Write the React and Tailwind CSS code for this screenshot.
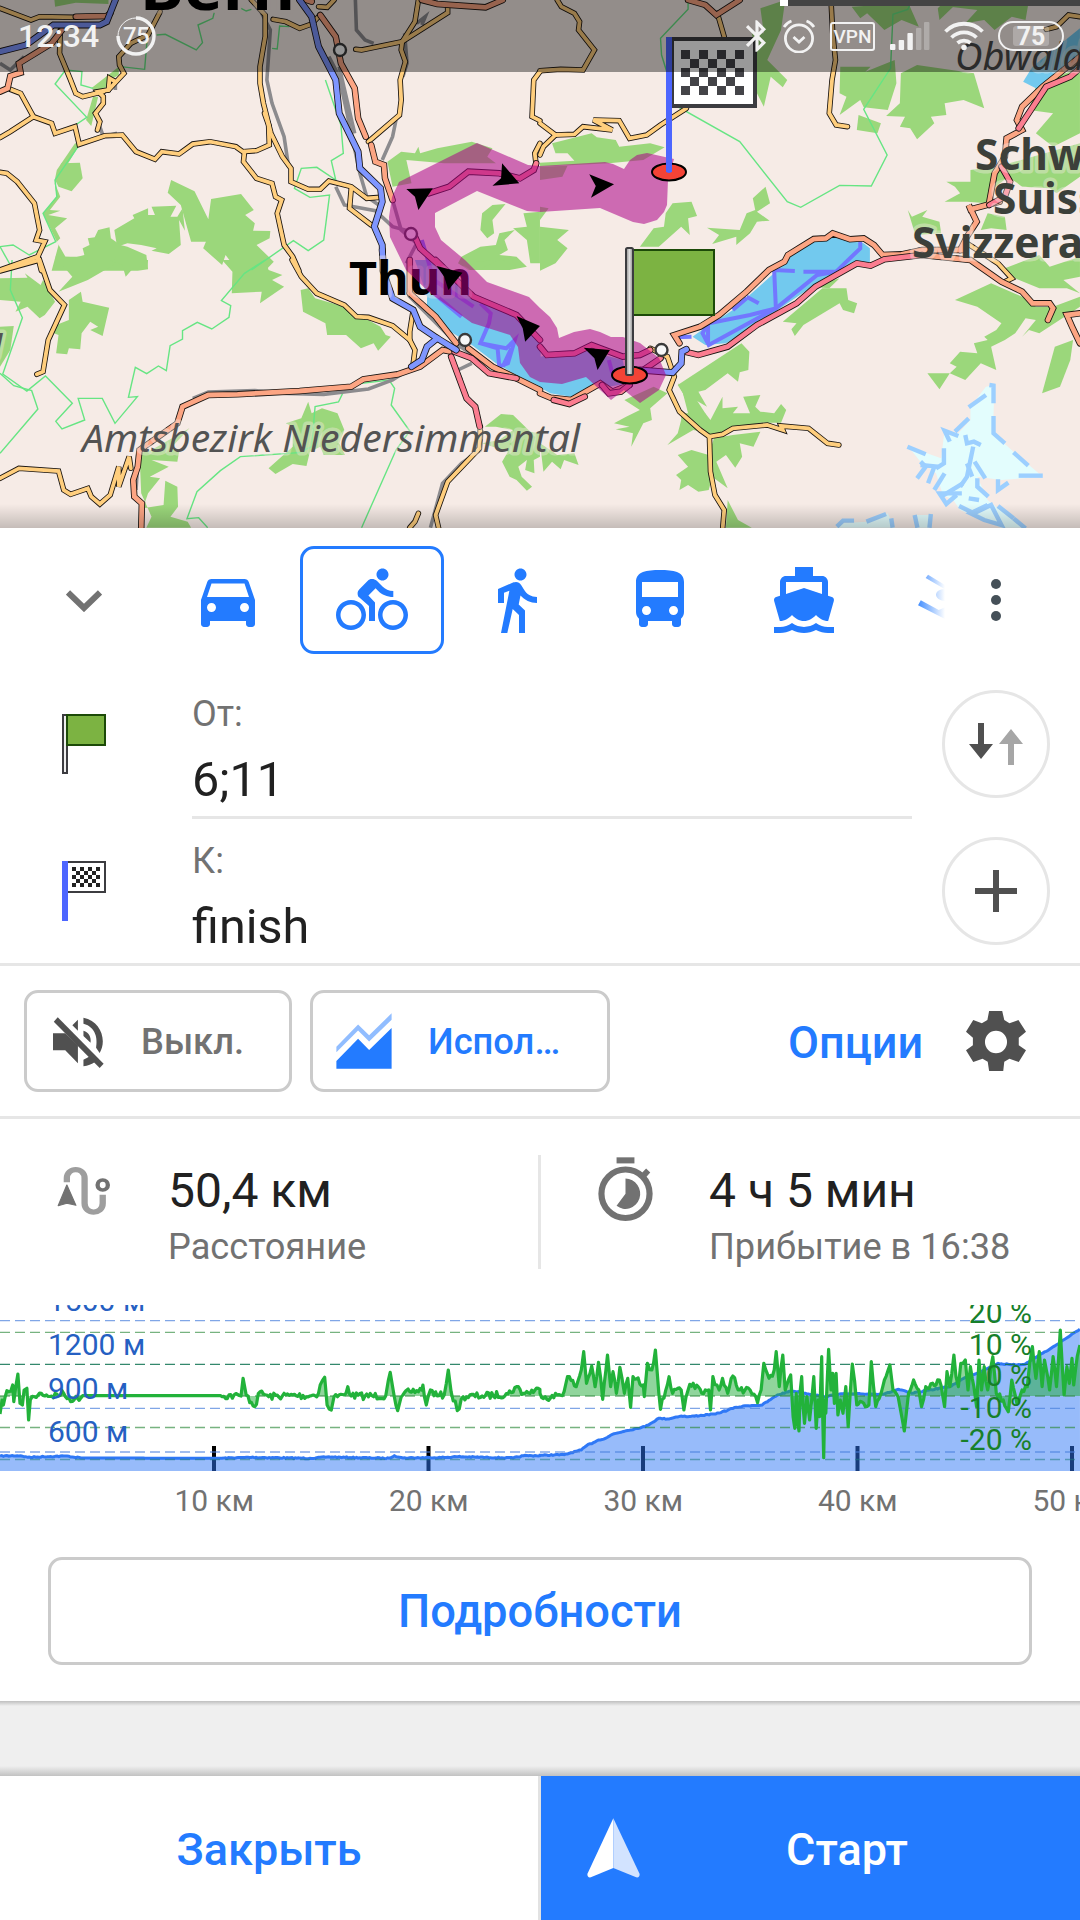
import React from "react";
import { MdDirectionsCar, MdDirectionsBus, MdBluetooth } from "react-icons/md";

const BLUE = "#237bff";

/* ---------- Map data: four tiles, each with its own local grid ---------- */
const TILES = {
  a: "translate(0 0) scale(.34436 .33333)",
  b: "translate(540 0) scale(.34436 .33333)",
  c: "translate(0 260) scale(.34436 .33333)",
  d: "translate(540 200) scale(.34436 .33333)",
};

const FORESTS = {
  a: [
    "158,0 315,0 315,12 220,8 160,20", "265,265 345,200 345,225 320,240 310,260 285,275",
    "270,290 285,290 265,378 250,360", "218,430 232,432 180,520 158,545 165,510",
    "178,490 232,488 240,535 208,574 170,560 160,540", "158,545 175,590 145,630 175,632 140,645 195,655 160,685 175,715 165,725 125,640 165,590",
    "497,540 565,574 605,658 613,597 700,582 737,630 712,645 740,670 735,692 785,693 783,715 745,735 795,785 770,812 690,812 655,765 645,795 590,745 598,725 555,725 525,615 487,578",
    "332,690 390,655 385,645 430,625 430,645 450,645 440,620 512,617 495,650 515,650 530,625 537,692 520,660 525,735 490,762 440,752 455,745 410,735 370,730 340,740",
    "165,725 190,770 220,772 245,765 240,745 260,735 255,715 275,712 285,690 318,682 322,715 350,735 370,740 425,765 430,808 400,812 150,812 170,735",
    "1125,485 1165,455 1205,460 1215,440 1220,460 1270,445 1370,425 1430,445 1415,470 1440,490 1290,490 1180,480 1195,550 1140,560",
    "1395,690 1400,640 1430,615 1468,612 1430,660 1435,700 1415,715", "1340,770 1395,740 1440,735 1450,700 1495,690 1465,720 1475,750 1450,765 1500,770 1530,800 1480,810 1360,810 1330,790",
    "1520,640 1568,635 1568,790 1540,790 1530,720 1490,685 1530,680",
  ],
  b: [
    "35,430 150,400 165,412 220,420 230,440 320,430 362,442 300,480 200,490 0,500 0,488 100,482 80,460 45,460",
    "0,500 80,497 65,530 0,540", "0,620 25,625 0,660 0,680 84,690 50,720 80,745 45,790 0,812",
    "640,25 712,0 700,90 660,180 718,240 705,262 670,230 650,320 630,280 630,180 615,100 650,100",
    "905,20 1070,10 1100,80 1050,60 1000,90 950,40 930,55", "1155,25 1180,0 1200,20 1160,60",
    "1180,0 1420,0 1410,60 1370,50 1320,90 1290,60 1235,70 1270,30 1190,20",
    "872,200 960,200 945,215 1030,180 1035,250 1010,330 940,322 930,300 870,345 890,290 870,280", "925,345 990,370 980,400 920,390",
    "1048,220 1095,195 1260,220 1290,325 1230,300 1175,310 1180,345 1135,350 1145,370 1095,418 1075,385 1045,380 1060,350 1005,348 1045,310",
    "1440,260 1568,200 1568,400 1490,440 1440,400 1490,340 1420,330",
    "1260,520 1568,430 1568,530 1500,580 1480,565 1400,560 1360,530 1310,570 1240,590",
    "1175,605 1220,580 1205,560 1180,545 1250,545 1250,510 1320,500 1300,610 1240,605",
    "1068,630 1080,650 1125,630 1110,650 1160,665 1165,700 1090,705",
    "485,683 580,690 600,640 625,630 618,595 655,560 668,610 630,635 667,662 630,665 610,700 570,735 570,710 500,732 520,705",
    "365,640 385,610 440,605 456,648 430,655 435,705 410,680 345,740 290,740 330,685 360,680",
    "1300,640 1350,650 1355,690 1310,685 1280,690",
  ],
  c: [
    "160,-10 335,-10 330,15 255,60 170,95 210,50", "320,0 430,0 428,27 395,15 365,50 355,15",
    "0,55 80,53 72,40 118,75 125,60 160,125 130,165 115,175 80,140 45,155 60,125 0,120",
    "150,200 200,180 200,120 235,95 240,125 317,143 298,228 262,210 285,200 262,185 237,220 233,268 200,265 195,283 163,280 170,225 145,215",
    "0,200 40,198 30,270 0,320", "645,0 770,0 780,30 820,45 790,60 825,80 755,130 760,95 673,100 675,35",
    "873,90 895,85 915,115 1000,140 1105,200 1120,225 1135,230 1098,272 1085,250 1048,265 1005,225 950,225 945,190 880,155",
    "830,490 875,475 895,425 905,460 935,445 980,460 1000,510 985,550 1002,585 940,585 930,560 900,575 890,618 850,612 800,642 780,625 850,560 850,500",
    "405,580 440,570 550,505 500,560 520,575 515,605 440,600 490,620 435,650 465,655 430,700 415,745 475,735 480,662 515,680 517,740 495,770 545,785 555,803 425,803 440,770 410,700",
    "1408,500 1455,462 1490,465 1540,515 1568,520 1568,590 1550,600 1552,640 1525,630 1530,600 1505,620 1515,650 1545,680 1530,692 1500,660 1480,650 1458,605 1475,575 1400,550 1450,540 1490,510 1440,500",
    "1355,25 1380,5 1450,0 1400,25", "1460,0 1485,0 1500,20",
  ],
  d: [
    "705,365 820,265 890,265 895,300 921,310 912,340 880,330 870,310 765,375 740,408 730,388 745,370", "790,260 870,235 840,265",
    "400,555 585,430 608,455 605,510 580,517 575,545 545,520 480,570 460,575 485,620 460,605 450,600 455,640 430,620 415,580",
    "410,640 480,640 495,660 530,590 530,625 575,620 560,640 610,640 590,590 640,585 625,620 640,635 680,640 700,612 715,630 700,668 640,668 560,690 500,705 470,695 445,690 370,735 400,700 410,660",
    "505,715 560,705 640,695 620,740 580,730 587,770 567,803 540,765 512,785 545,865 500,830 490,870 460,875 430,855 405,870 410,840 395,825 430,800 400,765 440,750 490,765",
    "400,550 415,580 430,640 450,680 490,700 480,640 455,600", "545,900 575,960 615,983 540,983",
    "245,600 330,560 370,580 320,625 325,660 300,670 265,740 270,700 220,688 260,680 215,670 250,650 290,630",
    "0,730 30,750 50,765 100,760 112,795 70,780 60,808 35,785 10,815",
    "1205,300 1310,250 1400,290 1440,320 1490,320 1568,290 1568,320 1450,400 1420,390 1400,410 1440,360 1410,355 1380,400 1350,420 1310,440 1325,510 1280,490 1235,540 1190,520 1160,568 1125,520 1190,520 1210,500 1190,490 1220,455 1270,460 1260,430 1300,420 1290,410 1325,390 1340,370 1270,320",
    "1495,440 1548,420 1540,480 1510,560 1458,580", "1350,205 1450,165 1480,200 1568,170 1568,230 1520,240 1568,280 1530,265 1450,265 1380,235",
  ],
};

const BORDERS = {
  a: [
    "190,210 160,252 252,352 215,378 232,432 160,540 165,590 125,640 162,725 85,765 38,735 0,740", "0,740 30,795",
    "190,210 238,215 235,255 270,265", "455,105 480,103 570,150 588,128 575,75 618,55 622,38", "428,108 420,208 350,200",
    "700,25 715,33 730,28", "790,145 805,147 812,78 840,80",
    "945,240 990,375 997,460 962,482 975,540 920,502 875,505 855,565 900,592 957,585 940,720 895,752 852,722 730,810",
  ],
  b: ["430,0 430,28 350,115 353,165 400,320 580,425 718,605 757,622 870,556 962,558 1008,465 940,328 1018,205 1025,43 1068,28 1080,0"],
  c: [
    "770,0 710,40 643,122 670,137 665,172 615,207 573,187 530,212 530,237 494,257 483,332 460,318 426,341 393,322 373,412 399,410 334,490 297,415 227,415 246,480 180,507 162,484 210,430 132,348 78,393 8,342 65,173 30,90 35,0",
    "0,340 40,377 92,392 110,447 0,580", "603,803 577,773 543,776 572,695 640,632 698,590 868,578 905,560 915,440 983,426 995,400",
    "1050,370 1130,360 1146,385 1136,435 1190,513 1150,570 1050,803",
  ],
};

const RAILS = {
  a: [
    "755,30 785,90 775,240 790,310 825,410 838,500", "955,170 985,230 1045,520 1065,590 1100,615", "1032,0 1035,90 1060,120 1085,130",
    "1150,360 1140,410 1110,480", "975,560 1000,615 1090,632 1140,680 1195,695", "0,190 30,210 70,170", "1140,600 1165,690 1210,730 1180,790",
    "1210,70 1235,50 1225,75", "1175,100 1182,190 1170,230", "280,350 300,410 340,400", "335,235 335,270", "985,200 1030,400",
  ],
  c: [
    "560,415 605,396 740,392 830,400 940,403 1070,387 1140,360 1200,320", "1185,105 1330,255 1440,330", "1330,330 1370,310",
    "1310,290 1340,360", "1400,510 1395,570 1340,610 1285,670 1250,803", "402,580 395,690",
  ],
};

const ROADS = [
  {
    color: "#ffce7d", width: 3.8,
    lines: {
      a: [
        "0,25 90,60 115,50 220,52", "175,90 173,160 203,235 220,280 240,290 300,275",
        "465,35 430,105 380,130 345,170 347,195 360,220 315,270 285,275 300,290 300,310 277,340 290,365 283,390", "315,270 318,235 335,245",
        "30,268 60,280 97,350 150,370 160,400 218,380 230,433 305,407 355,405 395,455 450,478 470,455 520,462 560,432 610,425 685,440 705,455 745,452 782,435 780,375",
        "0,413 30,395 97,350",
        "730,0 770,45 770,110 755,200 755,250 765,310 787,400 820,470 845,505 845,545 895,568 930,568 955,543 1020,560 1065,595 1105,592",
        "768,340 780,375", "710,455 707,485 745,535 790,550 800,590 818,600 805,640 825,735 850,770 868,812",
        "0,517 20,520 50,545 100,610 115,690 105,720 130,725 110,770 0,810", "110,770 120,812", "793,58 830,65 870,85 905,72 925,50",
        "970,0 950,22 925,20", "1215,0 1205,65 1168,125 1165,150 1177,185 1162,240 1165,300 1160,345 1070,425", "1168,125 1300,38 1300,20",
        "1033,148 1050,150 1168,125", "1020,565 1015,625 1078,675", "1568,215 1550,240 1545,350 1568,362", "1568,430 1553,460 1557,495",
      ],
      b: [
        "50,0 62,20 100,40 115,65 112,90 158,150 125,210 60,208 0,212", "515,40 535,110",
        "0,370 45,405 100,403 125,380 210,390 155,360 230,362 260,415 310,405 350,375 425,325", "45,405 10,440 0,465",
        "845,0 850,100 858,180 848,240 840,340 860,375 893,380", "1470,88 1500,80 1535,45 1568,50",
      ],
      c: [
        "0,33 115,0 145,90 187,135 140,240 125,335 107,343",
        "0,655 55,625 170,633 185,690 205,703 255,685 265,710 290,732 320,705 345,620 345,680 375,590 380,625",
        "848,0 875,50 920,100 1000,135 1035,170 1070,172 1140,197 1190,240 1205,270 1200,310", "1200,150 1190,215 1190,240",
        "1395,500 1392,565 1300,665 1265,765 1275,810", "1215,760 1205,785 1190,803",
      ],
      d: [
        "320,445 370,470 390,530 375,570 405,635 465,690 492,710 495,815 508,885 535,930 530,990",
        "492,710 530,703 560,685 660,675 705,690 700,678 780,685 835,730 868,735", "1240,130 1330,190 1370,235 1350,245",
      ],
    },
  },
  {
    color: "#fca583", width: 4.8,
    lines: {
      a: [
        "220,50 310,48 320,40", "180,90 150,130 55,190 60,218 30,228 22,265 0,275", "930,45 975,110 990,190 1030,265 1040,355 1062,410",
        "1078,435 1090,485 1115,495 1118,535 1140,600", "1225,0 1270,12 1410,22 1460,0", "890,0 905,5",
      ],
      b: [
        "430,0 480,15 512,45 580,0", "1568,170 1460,260 1400,320 1385,360 1400,390 1355,415 1350,470 1320,520 1305,605",
        "1335,605 1250,628 1245,615 1268,665 1240,710 1220,750",
      ],
      c: [
        "1190,100 1265,170 1325,250", "1190,0 1190,100", "1360,265 1430,320 1500,355 1568,390",
        "1310,275 1285,270 1220,320 1155,343 1055,358 1020,380 870,393 690,403 605,405 530,440 515,490 405,570 400,620 387,660 390,710 412,730 410,810",
      ],
      d: [
        "405,430 390,405 465,380 520,345 600,275 665,210 710,185 720,165 795,117 830,115 850,100 900,118 940,115 970,135 995,165 1050,163 1110,150 1230,150",
        "1110,165 1250,180 1340,245 1400,275 1430,310 1480,310 1490,325 1475,360", "1568,340 1530,345 1545,380 1568,430",
        "0,580 30,593 90,600 175,550 210,575 260,555",
      ],
    },
  },
  {
    color: "#fb7d90", width: 4.8,
    lines: {
      a: ["1205,710 1220,745 1280,800", "1245,580 1305,560 1360,515 1450,520 1510,535 1550,510 1557,490"],
      b: ["1568,205 1540,230 1470,260 1390,385", "1340,500 1365,545 1350,590 1305,615"],
      c: ["1320,275 1370,295 1420,340 1500,355", "1310,290 1355,415 1380,440 1393,500", "1265,0 1375,110 1500,165 1568,240"],
      d: [
        "0,440 20,465 100,460 150,435 240,470 290,465 320,450", "300,510 350,475", "180,555 200,580 235,575 260,555", "40,600 85,612 130,590",
        "420,455 460,465 545,440 630,375 745,310 800,260 920,190 960,197 1000,178 1110,165",
      ],
    },
  },
  {
    color: "#7f96ff", width: 5.2,
    lines: {
      a: [
        "335,0 310,65 290,75 155,75 75,135 0,155",
        "870,0 905,50 925,140 975,240 985,340 1040,455 1045,505 1105,565 1110,605 1087,680 1110,735 1112,812",
      ],
      c: ["1110,-30 1115,40 1140,115 1200,150 1220,200 1270,235 1325,270", "1270,235 1240,260 1225,300 1195,320"],
      d: ["290,510 385,518 410,490 412,455 425,448"],
    },
  },
];

const LAKES = {
  b: ["1430,200 1568,85 1568,170 1450,270 1403,245"],
  c: ["1205,0 1265,0 1380,120 1500,170 1570,250 1570,380 1500,345 1440,310 1370,255 1240,170 1240,110"],
  d: [
    "-1,470 130,450 240,480 255,550 200,560 170,545 90,590 30,580 -1,562",
    "443,410 470,390 560,330 690,210 720,170 795,122 850,112 900,122 940,130 958,145 958,185 860,225 790,260 690,330 620,380 540,430 480,435",
  ],
};

const FERRIES = {
  c: ["1265,105 1340,170", "1395,130 1425,160 1420,190 1395,250 1445,265 1450,320 1475,310 1495,240 1470,265 1395,250", "1460,320 1485,265", "1225,-60 1260,60 1375,140"],
  d: [
    "930,125 930,145 860,215 805,225 685,325 610,345 490,370", "685,325 490,435 472,400 488,370 488,430", "685,325 680,210 740,213", "765,215 870,215",
    "600,290 635,310", "560,330 600,295", "390,412 440,410", "200,480 210,520",
  ],
};

const GLACIER = [
  "1295,560 1320,555 1315,700 1380,760 1460,830 1340,840 1270,830 1300,900 1400,983 1340,983 1220,930 1200,900 1170,885 1150,820 1105,785 1070,740 1165,775 1175,690 1215,700 1250,660 1250,620",
  "870,970 950,965 1010,940 1030,983 860,983", "1085,945 1135,945 1130,983 1095,983",
];
const GLACIER_EDGES = [
  "1305,555 1317,557 1317,610", "1295,585 1245,622", "1317,648 1317,700 1350,730", "1245,655 1205,695", "1215,708 1175,692 1190,725",
  "1067,740 1120,763", "1173,745 1173,790 1150,805", "1375,757 1418,797", "1390,827 1460,827", "1105,785 1120,800 1095,835", "1105,795 1155,800",
  "1145,800 1127,850", "1175,820 1145,870", "1228,850 1165,890", "1225,880 1160,880 1180,912 1210,885", "1235,705 1240,730 1260,725 1280,735",
  "1258,740 1240,830 1220,860", "1262,785 1293,835", "1240,790 1255,830", "1270,835 1270,860 1302,890", "1330,838 1330,870 1360,848",
  "1245,895 1275,900", "1217,918 1260,940 1310,915 1340,975 1290,960 1250,940 1300,915", "1330,918 1375,955", "1375,955 1410,985",
  "862,980 880,962 912,962", "948,965 1005,942", "1020,955 1024,983", "1088,945 1096,983", "1135,942 1131,983",
];

const ARROWS = {
  a: ["1180,567 1257,565 1215,630 1205,590", "1458,490 1508,550 1430,557 1455,535"],
  b: ["143,523 215,553 148,593 162,558"],
  c: ["1268,18 1343,38 1302,90 1290,50", "1500,168 1568,198 1525,245 1518,205"],
  d: ["127,443 203,450 167,510 158,475"],
};

const ROUTE =
  "477,143 399,182 392,197 389,217 390,237 406,270 430,293 472,323 510,335 518,347 520,363 530,377 540,382 562,384 586,377 611,400 624,390 640,403 659,390 666,375 659,358 640,343 623,337 611,337 600,332 590,329 574,332 559,338 557,328 550,317 540,308 529,297 487,282 465,260 441,240 435,227 435,213 477,191 527,211 540,212 600,208 633,222 644,224 657,220 664,212 667,205 668,180 674,159 647,153 637,155 630,160 624,169 613,164 605,162 540,166 528,165";

function Shapes({ data, line, ...rest }) {
  return Object.entries(data).map(([tile, list]) => (
    <g key={tile} transform={TILES[tile]} {...rest}>
      {list.map((p, i) =>
        line ? (
          <polyline key={i} points={p} fill="none" vectorEffect="non-scaling-stroke" />
        ) : (
          <polygon key={i} points={p} />
        )
      )}
    </g>
  ));
}

function Checker({ x, y, s, fill }) {
  const cells = [];
  for (let r = 0; r < 5; r++)
    for (let c = 0; c < 7; c++) if ((r + c) % 2 === 0) cells.push(<rect key={r + "-" + c} x={x + c * s} y={y + r * s} width={s} height={s} fill={fill} />);
  return <g shapeRendering="crispEdges">{cells}</g>;
}

const NOTO = "'Noto Sans', 'Open Sans', sans-serif";

function MapView() {
  const halo = { stroke: "#f7ebe6", strokeOpacity: 0.4, strokeWidth: 7, paintOrder: "stroke", strokeLinejoin: "round" };
  return (
    <svg className="block h-[528px] w-[1080px]" viewBox="0 0 1080 528">
      <defs>
        <linearGradient id="mapShade" x1="0" x2="0" y1="0" y2="1">
          <stop offset="0" stopColor="#000" stopOpacity="0" />
          <stop offset="1" stopColor="#000" stopOpacity=".2" />
        </linearGradient>
        <linearGradient id="pole" x1="0" x2="1" y1="0" y2="0">
          <stop offset="0" stopColor="#8c8c8c" />
          <stop offset=".5" stopColor="#dedede" />
          <stop offset="1" stopColor="#8c8c8c" />
        </linearGradient>
      </defs>
      <rect width="1080" height="528" fill="#f6ebe6" />
      <Shapes data={FORESTS} fill="#9bd77b" />
      <g transform={TILES.d} fill="#e3fdfd">
        {GLACIER.map((p) => <polygon key={p} points={p} />)}
      </g>
      <Shapes data={{ d: GLACIER_EDGES }} line stroke="#9ccfff" strokeWidth="4.4" />
      <Shapes data={BORDERS} line stroke="#66e583" strokeWidth="1.4" />
      <Shapes data={LAKES} fill="#72c9ee" />
      <Shapes data={RAILS} line stroke="#8c8b8e" strokeWidth="3.6" />
      <Shapes data={FERRIES} line stroke="#7277ff" strokeWidth="4" />
      {ROADS.map((r) => (
        <g key={r.color}>
          <Shapes data={r.lines} line stroke="#181310" strokeWidth={r.width + 1.7} strokeLinecap="round" />
          <Shapes data={r.lines} line stroke={r.color} strokeWidth={r.width} strokeLinecap="round" />
        </g>
      ))}
      {[[340, 50], [411, 234], [465, 340], [661.5, 350]].map(([x, y]) => (
        <circle key={x} cx={x} cy={y} r="6" fill="#f7f7f7" stroke="#3a3a3a" strokeWidth="2.4" />
      ))}
      <g fontFamily={NOTO} {...halo}>
        <text x="140" y="10" fontSize="62" fontWeight="700" textLength="155" lengthAdjust="spacingAndGlyphs">Bern</text>
        <text x="349" y="295" fontSize="47" fontWeight="700" textLength="123" lengthAdjust="spacingAndGlyphs">Thun</text>
        <g fill="#3c403a" fontSize="42.5" fontWeight="700">
          <text x="975" y="170">Schweiz</text>
          <text x="993" y="214">Suisse</text>
          <text x="912" y="258">Svizzera</text>
        </g>
        <g fill="#535353" fontSize="38" fontStyle="italic">
          <text x="82" y="452" textLength="498" lengthAdjust="spacingAndGlyphs">Amtsbezirk Niedersimmental</text>
          <text x="955" y="70" fill="#484848">Obwalden</text>
          <text x="-19" y="354" fontWeight="700">g</text>
        </g>
      </g>
      <polygon points={ROUTE} fill="#ab0087" fillOpacity=".55" strokeLinejoin="round" />
      <Shapes data={ARROWS} fill="#000" />

      <ellipse cx="669" cy="172" rx="17" ry="8.5" fill="#f44336" stroke="#000" strokeWidth="2" />
      <rect x="672" y="39" width="83" height="67" fill="#fff" stroke="#3c3c40" strokeWidth="4" />
      <rect x="666" y="37" width="6" height="135" fill="#4d66ff" />
      <circle cx="669" cy="170" r="3" fill="#4d66ff" />
      <Checker x={681} y={50} s={9} fill="#444448" />

      <ellipse cx="629.5" cy="375" rx="17.5" ry="8.5" fill="#f44336" stroke="#000" strokeWidth="2" />
      <rect x="633" y="250" width="81" height="65" fill="#7cb342" stroke="#1c4a08" strokeWidth="2" />
      <rect x="626" y="248" width="7" height="127" rx="1.5" fill="url(#pole)" stroke="#3c3c40" strokeWidth="2" />
      <rect y="504" width="1080" height="24" fill="url(#mapShade)" />
    </svg>
  );
}

/* ---------- Status bar ---------- */
function StatusBar() {
  return (
    <div className="absolute inset-x-0 top-0 flex h-[72px] items-center bg-black/40 pl-[18px] pr-4 text-[#f2f2f2]">
      <span className="w-[98px] text-[32px] font-medium leading-none">12:34</span>
      <span className="relative flex h-10 w-10 items-center justify-center">
        <svg className="absolute inset-0" viewBox="0 0 40 40" fill="none" stroke="currentColor">
          <path d="M20 2a18 18 0 1 1-18 18" strokeWidth="3.4" />
          <path d="M2 20A18 18 0 0 1 20 2" strokeWidth="1" />
        </svg>
        <span className="text-[24px] font-medium leading-none tracking-tight">75</span>
      </span>
      <span className="flex-1" />
      <MdBluetooth className="mr-[6px] size-[38px]" />
      <svg className="mr-[14px] h-[34px] w-[34px]" viewBox="0 0 34 34" fill="none" stroke="currentColor" strokeWidth="2.8">
        <circle cx="17" cy="19.5" r="13.6" />
        <path d="M11.5 18l5.5 5 5.5-5M2 8Q5 3.5 9.500 2M32 8Q29 3.500 24.500 2" />
      </svg>
      <span className="mr-[15px] flex h-[29px] w-[45px] items-center justify-center rounded-[3px] border-2 border-[#f2f2f2] text-[19px] font-medium leading-none">VPN</span>
      <svg className="mr-[14px] h-7 w-10" viewBox="0 0 40 28">
        {[[0, 6], [8.7, 10], [17.4, 17], [26, 22], [34, 28]].map(([x, h], i) => (
          <rect key={x} x={x} y={28 - h} width="5.4" height={h} rx="1" fill="#f2f2f2" opacity={i > 2 ? 0.3 : 1} />
        ))}
      </svg>
      <svg className="mr-[14px] h-[30px] w-10" viewBox="0 0 40 30" fill="none" stroke="currentColor" strokeWidth="3.8">
        <path d="M1.500 10.500A26 26 0 0 1 38.500 10.500M7.500 16.500A18 18 0 0 1 32.500 16.500M13.500 22A10 10 0 0 1 26.500 22" />
        <circle cx="20" cy="26.5" r="2.8" fill="currentColor" stroke="none" />
      </svg>
      <span className="flex h-[30px] w-[66px] items-center justify-center rounded-full border-[2.5px] border-[#f2f2f2]">
        <span className="flex h-5 w-[36px] items-center justify-center rounded-[3px] bg-white/25 text-[25px] font-bold leading-none">75</span>
      </span>
    </div>
  );
}

/* ---------- Icons ---------- */
const BikeIcon = () => (
  <svg className="size-[72px]" viewBox="0 0 24 24" fill="currentColor">
    <path d="M15.5 5.5c1.100 0 2-.9 2-2s-.9-2-2-2-2 .9-2 2 .9 2 2 2zM5 12c-2.800 0-5 2.200-5 5s2.200 5 5 5 5-2.200 5-5-2.200-5-5-5zm0 8.500c-1.900 0-3.500-1.600-3.500-3.500s1.600-3.500 3.500-3.500 3.500 1.600 3.500 3.500-1.600 3.500-3.500 3.500zm5.800-10l2.400-2.400.8.8c1.300 1.300 3 2.100 5.100 2.100V9c-1.500 0-2.700-.6-3.600-1.500l-1.900-1.900c-.5-.4-1-.6-1.600-.6s-1.100.2-1.400.6L7.800 8.400c-.4.4-.6.9-.6 1.400 0 .6.2 1.100.6 1.400L11 14v5h2v-6.200l-2.200-2.300zM19 12c-2.800 0-5 2.200-5 5s2.200 5 5 5 5-2.200 5-5-2.200-5-5-5zm0 8.500c-1.900 0-3.500-1.600-3.500-3.500s1.600-3.500 3.500-3.500 3.500 1.600 3.500 3.500-1.600 3.500-3.500 3.500z" />
  </svg>
);
const WalkIcon = () => (
  <svg className="size-[72px]" viewBox="0 0 24 24" fill="currentColor">
    <path d="M13.5 5.500c1.100 0 2-.9 2-2s-.9-2-2-2-2 .9-2 2 .9 2 2 2zM9.800 8.900L7 23h2.100l1.800-8 2.100 2v6h2v-7.500l-2.100-2 .6-3C14.800 12 16.800 13 19 13v-2c-1.900 0-3.500-1-4.300-2.400l-1-1.600c-.4-.6-1-1-1.700-1-.3 0-.5.1-.8.1L6 8.300V13h2V9.600l1.800-.7" />
  </svg>
);
const BoatIcon = () => (
  <svg className="size-[72px]" viewBox="0 0 24 24" fill="currentColor">
    <path d="M20 21c-1.390 0-2.780-.47-4-1.320-2.440 1.710-5.560 1.710-8 0C6.780 20.530 5.390 21 4 21H2v2h2c1.380 0 2.740-.35 4-.99 2.520 1.290 5.480 1.290 8 0 1.260.65 2.620.99 4 .99h2v-2h-2zM3.950 19H4c1.600 0 3.020-.88 4-2 .98 1.120 2.400 2 4 2s3.020-.88 4-2c.98 1.120 2.400 2 4 2h.05l1.890-6.680c.08-.26.06-.54-.06-.78s-.34-.42-.6-.5L20 10.620V6c0-1.100-.9-2-2-2h-3V1H9v3H6c-1.100 0-2 .9-2 2v4.620l-1.290.42c-.26.08-.48.26-.6.500s-.15.520-.06.780L3.950 19zM6 6h12v3.970L12 8 6 9.970V6z" />
  </svg>
);
const SkiIcon = () => (
  <svg className="h-[60px] w-[28px]" viewBox="1095 120 81 180" preserveAspectRatio="none">
    <defs>
      <linearGradient id="skiFade" gradientUnits="userSpaceOnUse" x1="1085" x2="1176" y1="0" y2="0">
        <stop offset="0" stopColor={BLUE} />
        <stop offset="1" stopColor={BLUE} stopOpacity="0" />
      </linearGradient>
    </defs>
    <path d="M1127 134L1176 165V178L1120 144ZM1106 211L1158 240 1176 232V267L1098 226ZM1176 178C1143 176 1140 210 1176 213Z" fill="url(#skiFade)" />
  </svg>
);
const GreenFlag = () => (
  <svg className="mb-[3px] h-[60px] w-[44px]" viewBox="0 0 44 60">
    <rect x="1" y="1" width="4" height="58" fill="#eee" stroke="#3c3c40" strokeWidth="2" />
    <rect x="5" y="1" width="38" height="30" fill="#7cb342" stroke="#1c4a08" strokeWidth="2" />
  </svg>
);
const FinishFlag = () => (
  <svg className="h-[60px] w-[44px]" viewBox="0 0 44 60">
    <rect x="5" y="1" width="38" height="30" fill="#fff" stroke="#3c3c40" strokeWidth="2" />
    <rect width="6" height="60" fill="#4d66ff" />
    <Checker x={10} y={6} s={4} fill="#222" />
  </svg>
);
const MuteIcon = () => (
  <svg className="mt-[3px] h-[52px] w-[51px]" viewBox="134 170 129 156" preserveAspectRatio="none" fill="#505050">
    <path d="M134 219H165L197 255V309L165 270H134ZM197 178V211L183 195ZM211 172C243 180 260 211 260 243 260 257 257 268 252 278L243 262C247 235 243 200 211 190ZM211 211C225 216 231 230 229 247L211 227ZM211 298C218 295 222 292 226 288L241 304C232 312 222 316 211 318Z" />
    <path d="M146 171L262 310 252 323 136 184Z" />
  </svg>
);
const TerrainIcon = () => (
  <svg className="h-[56px] w-[56px]" viewBox="850 160 142 167" preserveAspectRatio="none">
    <path d="M851 261L906 194 934 226 991 161V180L934 245 906 212 851 277Z" fill="#91bdff" />
    <path d="M851 303L906 237 934 270 991 205V326H851Z" fill={BLUE} />
  </svg>
);
const GearIcon = () => (
  <svg className="h-[60px] w-[60px]" viewBox="1237 153 174 180" preserveAspectRatio="none">
    <path fill="#505050" fillRule="evenodd" d="M1304 153H1342L1348 180 1363 190 1389 180 1411 215 1390 233V256L1411 271 1390 306 1363 296 1348 305 1345 333H1304L1300 305 1285 296 1258 306 1237 271 1257 256V233L1237 215 1258 180 1283 190 1299 180ZM1324 212A32 34 0 1 0 1324 280A32 34 0 1 0 1324 212Z" />
  </svg>
);
const RouteIcon = () => (
  <svg className="h-[50px] w-[54px]" viewBox="142 618 137 150" preserveAspectRatio="none" fill="none">
    <path d="M167 667V655C167 620 212 620 212 655V730C212 765 258 765 258 730V704" stroke="#9e9e9e" strokeWidth="16" />
    <ellipse cx="258" cy="675" rx="13" ry="15" stroke="#727272" strokeWidth="11" />
    <path d="M167 675L190 736 167 730 145 737Z" fill="#727272" stroke="#727272" strokeWidth="3" strokeLinejoin="round" />
  </svg>
);
const TimerIcon = () => (
  <svg className="mb-1 h-[64px] w-[55px]" viewBox="167 593 160 190" preserveAspectRatio="none" fill="#727272">
    <rect x="221" y="594" width="52" height="18" />
    <ellipse cx="247" cy="702" rx="70" ry="72" fill="none" stroke="#727272" strokeWidth="18" />
    <path d="M293 642L307 627 319 639 304 656ZM247 657A43 45 0 1 1 221 738L247 702Z" />
  </svg>
);

/* ---------- Elevation chart ---------- */
const GRADE_L =
  "0,372 6,330 10,345 15,320 25,305 37,285 40,335 52,252 58,340 65,345 70,300 78,295 83,390 88,330 100,320 120,310 150,318 185,310 190,320 215,330 240,317 640,317 700,318 706,265 715,315 740,350 755,305 780,320 840,316 900,318 925,310 930,285 943,262 950,345 962,360 970,320 1000,315 1010,290 1020,318 1060,318 1120,318 1128,270 1133,247 1140,290 1145,320 1155,362 1170,315 1190,305 1225,300 1228,285 1238,345 1250,300 1270,318 1290,315 1302,240 1310,305 1328,362 1345,320 1400,318 1475,312 1500,290 1520,310 1568,298";
const GRADE_R =
  "0,310 30,325 70,305 80,260 105,290 120,240 127,185 135,280 150,228 160,290 170,217 182,328 196,195 205,290 212,245 222,310 232,232 245,310 255,265 263,352 270,260 300,285 303,320 312,220 325,240 335,180 350,358 375,260 385,310 410,300 418,360 430,300 445,280 470,310 490,300 495,360 502,260 520,300 530,265 545,310 560,258 580,300 610,300 632,338 642,300 650,220 665,265 680,240 686,185 695,290 705,195 712,300 728,255 735,380 740,415 744,310 748,395 752,423 756,300 760,260 764,350 768,400 775,320 783,390 789,330 795,260 802,415 808,330 812,380 818,200 821,380 824,503 827,330 830,370 838,178 845,300 850,250 855,340 860,250 865,375 872,330 880,370 888,290 895,410 907,222 920,345 940,340 955,345 962,215 975,350 1000,270 1016,225 1025,300 1040,320 1058,423 1070,310 1085,270 1100,300 1108,350 1120,290 1160,270 1175,350 1182,245 1190,290 1202,195 1208,260 1215,290 1222,220 1235,210 1243,300 1250,230 1260,290 1268,350 1275,210 1282,300 1290,230 1300,300 1315,200 1325,310 1345,330 1360,365 1370,270 1385,340 1400,300 1415,290 1422,220 1430,170 1440,265 1450,185 1458,290 1465,210 1480,300 1490,200 1500,290 1511,120 1522,315 1530,230 1537,280 1545,205 1550,285 1560,200 1568,165";
const ELEV_L = "0,498 60,497 80,502 190,498 240,504 640,505 720,502 900,505 950,501 1130,505 1145,497 1170,504 1300,502 1325,500 1490,504 1520,497 1568,497";
const ELEV_R =
  "0,496 70,494 120,480 135,467 170,450 190,445 210,433 250,422 305,410 345,385 370,387 410,378 430,380 510,372 570,352 600,347 645,345 690,315 730,302 780,312 830,320 870,312 1000,312 1040,298 1080,310 1130,300 1190,290 1230,265 1290,240 1330,220 1370,225 1410,222 1450,195 1480,178 1520,150 1568,118";

const parse = (s, ox) =>
  s.split(" ").map((p) => {
    const [x, y] = p.split(",").map(Number);
    return [ox + x / 2.904, (y - 45) / 3];
  });

function roughen(points, amp) {
  let seed = 7;
  const rnd = () => {
    seed = (seed * 16807) % 2147483647;
    return seed / 2147483647 - 0.5;
  };
  const out = [];
  for (let i = 0; i < points.length - 1; i++) {
    const [x0, y0] = points[i];
    const [x1, y1] = points[i + 1];
    out.push([x0, y0]);
    const flat = x0 > 80 && x1 < 225 && x1 - x0 > 100;
    const n = Math.floor((x1 - x0) / 1.6);
    for (let k = 1; k < n; k++) {
      const t = k / n;
      out.push([x0 + (x1 - x0) * t, y0 + (y1 - y0) * t + (flat ? 0 : rnd() * amp)]);
    }
  }
  out.push(points[points.length - 1]);
  return out.map(([x, y]) => x.toFixed(1) + "," + y.toFixed(1)).join(" ");
}

const grade = roughen([...parse(GRADE_L, 0), ...parse(GRADE_R, 540)], 7);
const elev = roughen([...parse(ELEV_L, 0), ...parse(ELEV_R, 540)], 1);

function Chart() {
  const hline = (y, c, o = 1) => <line key={y} x1="0" x2="1080" y1={y} y2={y} stroke={c} strokeOpacity={o} strokeWidth="1.3" strokeDasharray="10 5" />;
  return (
    <svg className="block h-[166px] w-[1080px]" viewBox="0 0 1080 166">
      {[214, 428.5, 643, 857.5, 1072].map((x) => <rect key={x} x={x - 2} y="141" width="4" height="25" fill="#000" />)}
      <polygon points={`0,166 ${elev} 1080,166`} fill="#2f78f6" fillOpacity=".5" />
      <polyline points={elev} fill="none" stroke="#2f78f6" strokeWidth="3" />
      <polygon points={`0,91 ${grade} 1080,91`} fill="#22ab3a" fillOpacity=".5" />
      {[15.7, 103.3, 147].map((y) => hline(y, "#4a80dc", 0.7))}
      {[27.3, 91, 122.5].map((y) => hline(y, "#2e8b3c", 0.65))}
      {[59.3].map((y) => hline(y, "#0f7352", 0.85))}
      {[154.5].map((y) => hline(y, "#1f7a80", 0.55))}
      <polyline points={grade} fill="none" stroke="#22b23a" strokeWidth="3.2" strokeLinejoin="round" />
      <g fontFamily="Roboto, sans-serif" fontSize="30">
        <g fill="#2560c2">
          <text x="48" y="6">1500 м</text>
          <text x="48" y="50">1200 м</text>
          <text x="48" y="93.5">900 м</text>
          <text x="48" y="137">600 м</text>
        </g>
        <g fill="#17802a" textAnchor="end">
          <text x="1032" y="17.5">20 %</text>
          <text x="1032" y="49.5">10 %</text>
          <text x="1032" y="81">0 %</text>
          <text x="1032" y="112.5">-10 %</text>
          <text x="1032" y="145">-20 %</text>
        </g>
      </g>
    </svg>
  );
}

/* ---------- Panel pieces ---------- */
function Mode({ children, active }) {
  return (
    <div className={"flex h-[108px] w-[144px] shrink-0 items-center justify-center rounded-[14px] border-[3px] " + (active ? "border-[#237bff]" : "border-transparent")}>
      {children}
    </div>
  );
}

function PointRow({ icon, label, value, action, last }) {
  return (
    <div className={"flex h-[147px] " + (last ? "border-b-[3px] border-[#e6e6e6]" : "")}>
      <div className="flex w-[192px] items-center justify-start pl-[62px]">{icon}</div>
      <div className={"flex w-[720px] flex-col gap-6 pt-6 " + (last ? "" : "border-b-[3px] border-[#e6e6e6]")}>
        <span className="text-[36px] leading-none text-[#727272]">{label}</span>
        <span className="text-[48.5px] leading-none text-[#212121]">{value}</span>
      </div>
      <div className="flex h-[144px] w-[168px] items-center justify-center">
        <button className="flex size-[108px] items-center justify-center rounded-full border-[3px] border-[#e6e6e6]">{action}</button>
      </div>
    </div>
  );
}

function Stat({ icon, value, note, className }) {
  return (
    <div className={"flex " + className}>
      <div className="flex w-[168px] justify-center pt-[38px]">
        <div className="flex h-[68px] items-center">{icon}</div>
      </div>
      <div className="flex flex-col gap-[14px] pt-[48px]">
        <span className="whitespace-nowrap text-[48px] leading-none text-[#212121]">{value}</span>
        <span className="whitespace-nowrap text-[36.2px] leading-none text-[#727272]">{note}</span>
      </div>
    </div>
  );
}

export default function App() {
  return (
    <div className="flex h-[1920px] w-[1080px] flex-col overflow-hidden bg-[#efefef] font-['Roboto',sans-serif]">
      <div className="relative h-[528px] shrink-0">
        <MapView />
        <StatusBar />
        <div className="absolute right-0 top-0 flex h-[6px]">
          <div className="w-2 bg-white" />
          <div className="w-[292px] bg-[#444]" />
        </div>
      </div>

      <div className="h-[1173px] shrink-0 bg-white">
        <div className="flex h-[144px] items-center">
          <div className="flex w-[156px] shrink-0 items-center pl-[66px]">
            <svg className="mt-[2px] h-[22px] w-[36px]" viewBox="0 0 36 22" fill="none" stroke="#727272" strokeWidth="6">
              <path d="M2 2.500L18 18 34 2.500" />
            </svg>
          </div>
          <div className="flex w-[789px] shrink-0 items-center overflow-hidden text-[#237bff]">
            <Mode><MdDirectionsCar className="size-[72px]" /></Mode>
            <Mode active><BikeIcon /></Mode>
            <Mode><WalkIcon /></Mode>
            <Mode><MdDirectionsBus className="size-[72px]" /></Mode>
            <Mode><BoatIcon /></Mode>
            <div className="flex w-[69px] shrink-0 justify-end"><SkiIcon /></div>
          </div>
          <div className="flex w-[102px] flex-col items-center gap-[6px]">
            <i className="size-[10px] rounded-full bg-[#455058]" />
            <i className="size-[10px] rounded-full bg-[#455058]" />
            <i className="size-[10px] rounded-full bg-[#455058]" />
          </div>
        </div>

        <PointRow
          icon={<GreenFlag />}
          label="От:"
          value="6;11"
          action={
            <svg className="h-[42px] w-[54px]" viewBox="0 0 54 42">
              <path d="M9 0h6v21h9L12 36 0 21h9z" fill="#505050" />
              <path d="M39 42h6V21h9L42 6 30 21h9z" fill="#a6a6a6" />
            </svg>
          }
        />
        <PointRow
          last
          icon={<FinishFlag />}
          label="К:"
          value="finish"
          action={
            <svg className="size-[42px]" viewBox="0 0 42 42">
              <path d="M18 0h6v18h18v6H24v18h-6V24H0v-6h18z" fill="#505050" />
            </svg>
          }
        />

        <div className="flex h-[153px] items-center border-b-[3px] border-[#e6e6e6] pl-6">
          <button className="flex h-[102px] w-[268px] items-center rounded-[14px] border-[3px] border-[#cbcbcb] pl-[26px] text-[36.300px] font-medium leading-none text-[#727272]">
            <MuteIcon />
            <span className="pl-[37px] pt-[3px]">Выкл.</span>
          </button>
          <button className="ml-[18px] flex h-[102px] w-[300px] items-center rounded-[14px] border-[3px] border-[#cbcbcb] pl-[23px] text-[36.300px] font-medium leading-none text-[#237bff]">
            <TerrainIcon />
            <span className="pl-[36px] pt-[3px]">Испол…</span>
          </button>
          <span className="ml-[178px] w-[178px] pt-[2px] text-[45px] font-medium leading-none text-[#237bff]">Опции</span>
          <GearIcon />
        </div>

        <div className="relative flex h-[186px]">
          <Stat className="w-[541px]" icon={<RouteIcon />} value="50,4 км" note="Расстояние" />
          <Stat className="w-[539px]" icon={<TimerIcon />} value="4 ч 5 мин" note="Прибытие в 16:38" />
          <div className="absolute left-[538px] top-9 h-[114px] w-[3px] bg-[#e6e6e6]" />
        </div>

        <Chart />
        <div className="flex overflow-hidden pl-[107px] pt-[15px] text-[30px] leading-none text-[#727272]">
          {["10 км", "20 км", "30 км", "40 км", "50 км"].map((t) => (
            <span key={t} className="w-[214.5px] shrink-0 whitespace-nowrap text-center">{t}</span>
          ))}
        </div>

        <div className="px-12 pt-[41px]">
          <button className="flex h-[108px] w-full items-center justify-center rounded-[14px] border-[3px] border-[#cbcbcb] pt-[2px] text-[45.300px] font-medium leading-none text-[#237bff]">
            Подробности
          </button>
        </div>
      </div>

      <div className="flex h-[75px] shrink-0 flex-col justify-between">
        <div className="h-[5px] bg-gradient-to-b from-[#bfbfbf] to-[#efefef]" />
        <div className="h-[10px] bg-gradient-to-b from-[#efefef] to-[#c2c2c2]" />
      </div>

      <div className="flex h-[144px] shrink-0 text-[45px] font-medium leading-none">
        <button className="flex w-[541px] items-center justify-center border-r-[3px] border-[#e2e2e2] bg-white pt-[2px] text-[#237bff]">Закрыть</button>
        <button className="flex flex-1 items-center bg-[#237bff] text-white">
          <svg className="ml-[46px] h-[60px] w-[53px]" viewBox="542 384 153 178" preserveAspectRatio="none">
            <path d="M618 385V532L553 560Q543 562 543 550Z" fill="#fff" />
            <path d="M618 385V532L684 560Q694 562 694 550Z" fill="#d2e3ff" />
          </svg>
          <span className="pl-[146px] pt-[2px]">Старт</span>
        </button>
      </div>
    </div>
  );
}
